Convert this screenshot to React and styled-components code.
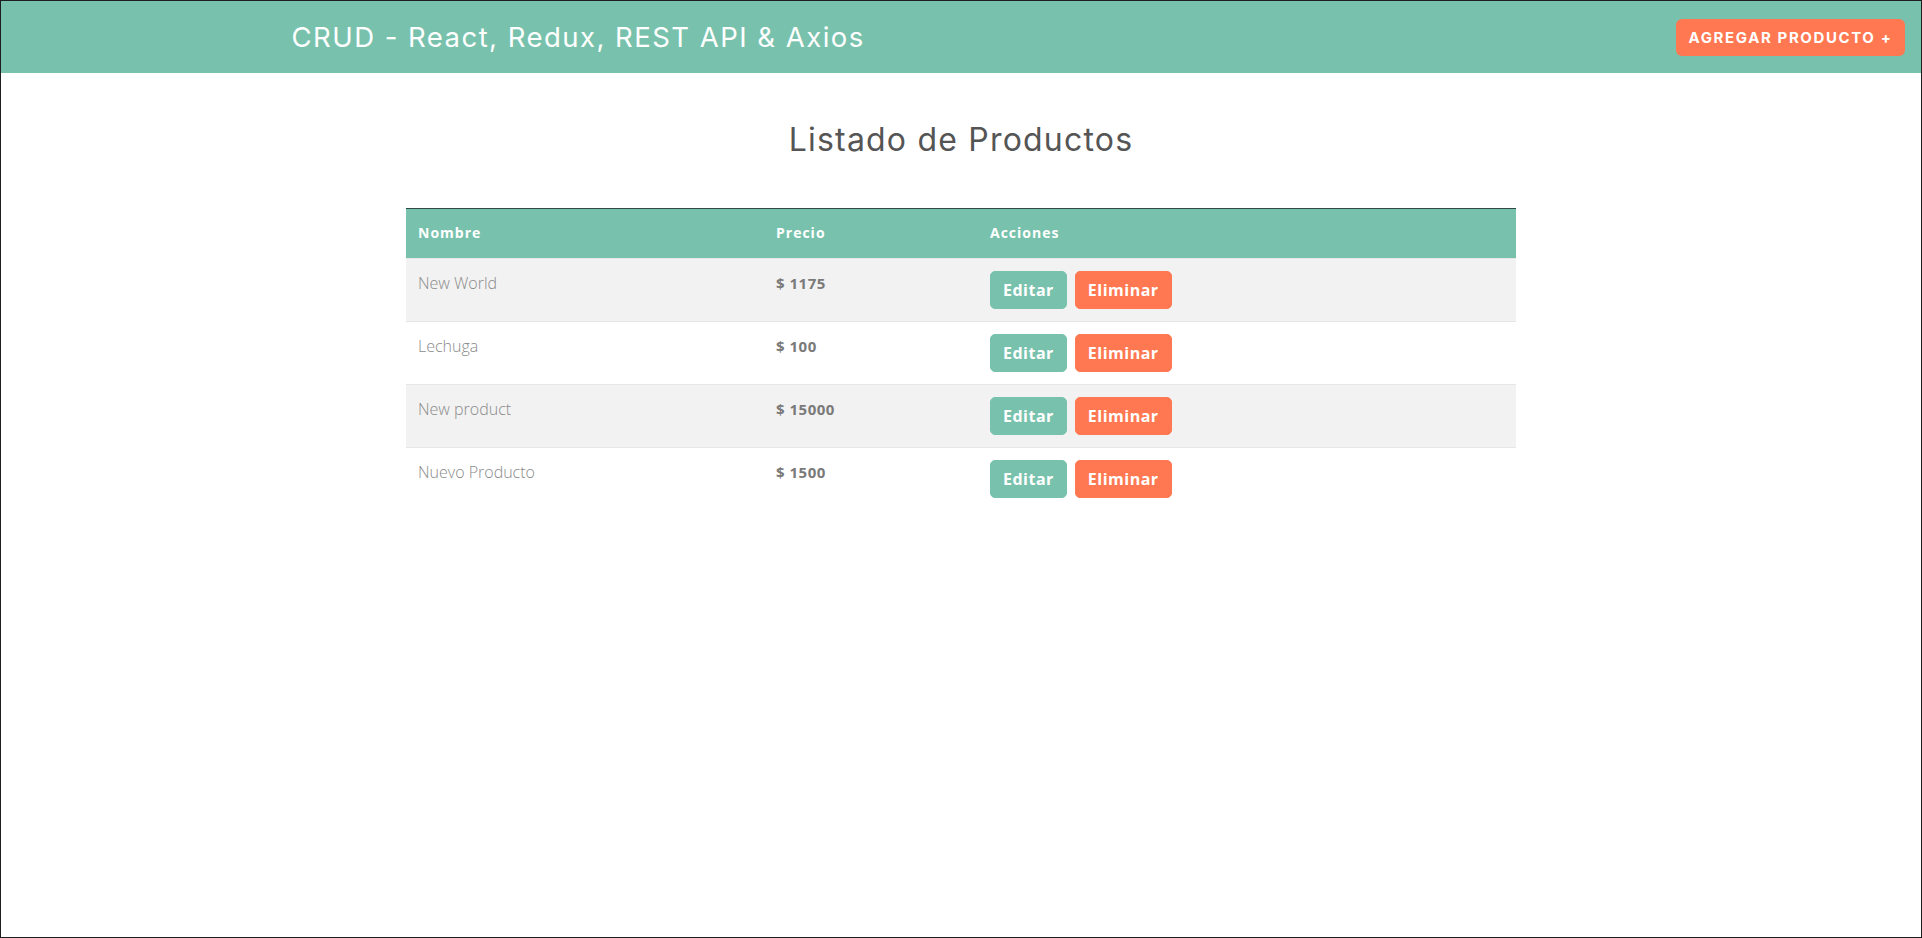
import React from "react";
import styled, { createGlobalStyle } from "styled-components";

const GlobalStyle = createGlobalStyle`
  html, body { margin: 0; padding: 0; background: #fff; }
  * { box-sizing: border-box; }
`;

const HEAD_FONT = `"Inter", "Noto Sans", sans-serif`;
const BODY_FONT = `"Open Sans", "Noto Sans", sans-serif`;

const Frame = styled.div`
  height: 938px;
  border: 1px solid #1e1e1e;
  overflow: hidden;
  background: #fff;
`;

const Header = styled.header`
  display: flex;
  align-items: center;
  justify-content: space-between;
  height: 72px;
  padding: 0 16px;
  background: #78c2ad;
`;

const HeaderInner = styled.div`
  width: 100%;
  max-width: 1140px;
  margin: 0 auto;
  padding: 0 15px;
`;

const Brand = styled.h1`
  margin: 0;
  font-family: ${HEAD_FONT};
  font-weight: 400;
  font-size: 27.5px;
  letter-spacing: 1.47px;
  line-height: 1.2;
  color: #fff;
`;

const AddButton = styled.a`
  flex: none;
  display: inline-flex;
  align-items: center;
  justify-content: center;
  height: 37px;
  width: 229px;
  border-radius: 6px;
  background: #ff7851;
  color: #fff;
  font-family: ${HEAD_FONT};
  font-weight: 700;
  font-size: 15px;
  letter-spacing: 1.6px;
  text-transform: uppercase;
  text-decoration: none;
`;

const Container = styled.main`
  max-width: 1140px;
  margin: 0 auto;
  padding: 0 15px;
`;

const Title = styled.h2`
  margin: 48px 0 49px;
  font-family: ${HEAD_FONT};
  font-weight: 400;
  font-size: 32px;
  letter-spacing: 1.2px;
  line-height: 38px;
  color: #555;
  text-align: center;
`;

const Table = styled.table`
  width: 100%;
  border-collapse: separate;
  border-spacing: 0;
  font-family: ${BODY_FONT};
  font-size: 16px;
  color: #888;
`;

const HeadRow = styled.tr`
  background: #78c2ad;
`;

const Th = styled.th`
  width: ${(p) => p.$w || "auto"};
  padding: 12px;
  line-height: 24px;
  text-align: left;
  font-weight: 700;
  font-size: 14px;
  letter-spacing: 1px;
  color: #fff;
  border-top: 1px solid #2f4a43;
  border-bottom: 1px solid #78c2ad;
`;

const Row = styled.tr`
  background: ${(p) => (p.$striped ? "#f2f2f2" : "#fff")};
`;

const Td = styled.td`
  padding: 12px;
  line-height: 24px;
  vertical-align: top;
  border-top: 1px solid #e6e6e6;
  font-weight: ${(p) => (p.$bold ? 700 : 300)};
  font-size: ${(p) => (p.$bold ? "15px" : "16px")};
  letter-spacing: ${(p) => (p.$bold ? "0.5px" : "0")};
  color: ${(p) => (p.$bold ? "#7a7a7a" : "#8a8a8a")};
`;

const Actions = styled.div`
  display: flex;
  gap: 8px;
`;

const ActionButton = styled.button`
  height: 38px;
  padding: 0 12px;
  border: 1px solid ${(p) => (p.$variant === "danger" ? "#ff7851" : "#78c2ad")};
  border-radius: 5px;
  background: ${(p) => (p.$variant === "danger" ? "#ff7851" : "#78c2ad")};
  color: #fff;
  font-family: ${BODY_FONT};
  font-weight: 700;
  font-size: 16px;
  letter-spacing: 0.5px;
  line-height: 24px;
  cursor: pointer;
`;

const products = [
  { id: 1, nombre: "New World", precio: 1175 },
  { id: 2, nombre: "Lechuga", precio: 100 },
  { id: 3, nombre: "New product", precio: 15000 },
  { id: 4, nombre: "Nuevo Producto", precio: 1500 },
];

export default function App() {
  return (
    <>
      <GlobalStyle />
      <Frame>
        <Header>
          <HeaderInner>
            <Brand>CRUD - React, Redux, REST API &amp; Axios</Brand>
          </HeaderInner>
          <AddButton href="#">Agregar Producto +</AddButton>
        </Header>
        <Container>
          <Title>Listado de Productos</Title>
          <Table>
            <thead>
              <HeadRow>
                <Th $w="358px">Nombre</Th>
                <Th $w="214px">Precio</Th>
                <Th>Acciones</Th>
              </HeadRow>
            </thead>
            <tbody>
              {products.map((p, i) => (
                <Row key={p.id} $striped={i % 2 === 0}>
                  <Td>{p.nombre}</Td>
                  <Td $bold>$ {p.precio}</Td>
                  <Td>
                    <Actions>
                      <ActionButton>Editar</ActionButton>
                      <ActionButton $variant="danger">Eliminar</ActionButton>
                    </Actions>
                  </Td>
                </Row>
              ))}
            </tbody>
          </Table>
        </Container>
      </Frame>
    </>
  );
}
